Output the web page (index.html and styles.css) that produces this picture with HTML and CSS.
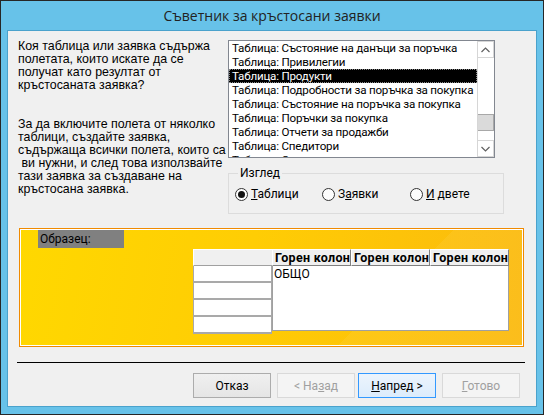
FILE: index.html
```html
<!DOCTYPE html>
<html lang="bg">
<head>
    <meta charset="utf-8">
    <title>Съветник за кръстосани заявки</title>
    <link rel="stylesheet" href="styles.css">
</head>
<body>
    <div class="window">
        <div class="titlebar">Съветник за кръстосани заявки</div>
        <div class="client">
            <div class="top">
                <div class="intro">
                    <p>Коя таблица или заявка съдържа<br>полетата, които искате да се<br>получат като резултат от<br>кръстосаната заявка?</p>
                    <p>За да включите полета от няколко<br>таблици, създайте заявка,<br>съдържаща всички полета, които са<br>&nbsp;ви нужни, и след това използвайте<br>тази заявка за създаване на<br>кръстосана заявка.</p>
                </div>
                <div class="picker">
                    <div class="listbox">
                        <ul class="items">
                            <li>Таблица: Състояние на данъци за поръчка</li>
                            <li>Таблица: Привилегии</li>
                            <li class="selected">Таблица: Продукти</li>
                            <li>Таблица: Подробности за поръчка за покупка</li>
                            <li>Таблица: Състояние на поръчка за покупка</li>
                            <li>Таблица: Поръчки за покупка</li>
                            <li>Таблица: Отчети за продажби</li>
                            <li>Таблица: Спедитори</li>
                            <li>Таблица: Служители</li>
                        </ul>
                        <div class="scrollbar">
                            <span class="sb-btn">
                                <svg width="9" height="6" viewBox="0 0 9 6"><path d="M0.5 5 L4.5 1 L8.5 5" fill="none" stroke="#606060" stroke-width="1.2"/></svg>
                            </span>
                            <span class="sb-track"><span class="sb-thumb"></span></span>
                            <span class="sb-btn">
                                <svg width="9" height="6" viewBox="0 0 9 6"><path d="M0.5 1 L4.5 5 L8.5 1" fill="none" stroke="#606060" stroke-width="1.2"/></svg>
                            </span>
                        </div>
                    </div>
                    <fieldset class="view">
                        <legend>Изглед</legend>
                        <label class="radio checked"><span class="circle"></span><span><u>Т</u>аблици</span></label>
                        <label class="radio"><span class="circle"></span><span>З<u>а</u>явки</span></label>
                        <label class="radio"><span class="circle"></span><span><u>И</u> двете</span></label>
                    </fieldset>
                </div>
            </div>

            <div class="sample">
                <div class="sample-label">Образец:</div>
                <div class="grid">
                    <div class="rowhdr">
                        <div class="corner"></div>
                        <div class="rcell"></div>
                        <div class="rcell"></div>
                        <div class="rcell"></div>
                        <div class="rcell"></div>
                    </div>
                    <div class="data">
                        <div class="heads">
                            <div class="head">Горен колона</div>
                            <div class="head">Горен колона</div>
                            <div class="head">Горен колона</div>
                        </div>
                        <div class="body">ОБЩО</div>
                    </div>
                </div>
            </div>

            <div class="divider"></div>

            <div class="buttons">
                <button class="btn">Отказ</button>
                <button class="btn disabled">&lt; На<u>з</u>ад</button>
                <button class="btn default"><u>Н</u>апред &gt;</button>
                <button class="btn disabled"><u>Г</u>отово</button>
            </div>
        </div>
    </div>
</body>
</html>
```

FILE: styles.css
```css
* {
    margin: 0;
    padding: 0;
    box-sizing: border-box;
}

body {
    background: #fff;
}

.window {
    width: 544px;
    height: 415px;
    border: 1px solid #262626;
    background: #67c2e9;
    display: flex;
    flex-direction: column;
    font-family: Roboto, "Liberation Sans", sans-serif;
    font-size: 12px;
    color: #000;
}

.titlebar {
    height: 29px;
    line-height: 29px;
    text-align: center;
    font-family: "Open Sans", sans-serif;
    font-size: 14px;
    color: #222;
}

.client {
    flex: 1;
    margin: 0 6px 7px;
    border: 1px solid #4aa2cc;
    background: #f0f0f0;
    padding-top: 9px;
    display: flex;
    flex-direction: column;
}

/* горна част: текст отляво, списък и изглед отдясно */
.top {
    display: grid;
    grid-template-columns: 200px 269px;
    column-gap: 10px;
    margin-left: 10px;
}

.intro {
    font-family: "Liberation Sans", sans-serif;
    font-size: 12.4px;
    line-height: 13px;
}

.intro p {
    white-space: nowrap;
}

.intro p + p {
    margin-top: 26px;
}

.listbox {
    width: 267px;
    height: 118px;
    border: 1px solid #828790;
    background: #fff;
    display: flex;
}

.items {
    flex: 1;
    list-style: none;
    overflow: hidden;
    font-size: 11.6px;
    letter-spacing: -0.2px;
}

.items li {
    height: 14px;
    line-height: 14px;
    padding-left: 3px;
    white-space: nowrap;
}

.items li.selected {
    background: #000;
    color: #fff;
    outline: 1px dotted #888;
    outline-offset: -1px;
}

.scrollbar {
    width: 17px;
    display: flex;
    flex-direction: column;
    border-left: 1px solid #d6d6d6;
}

.sb-btn {
    height: 17px;
    display: flex;
    align-items: center;
    justify-content: center;
    border: 1px solid #d6d6d6;
    border-left: none;
    background: #fff;
}

.sb-track {
    flex: 1;
    background: #fff;
}

.sb-thumb {
    display: block;
    height: 17px;
    margin-top: 56px;
    background: #dadada;
    border: 1px solid #a8a8a8;
    border-left: none;
}

.view {
    width: 269px;
    margin-top: 7px;
    border: 1px solid #dcdcdc;
    padding: 5px 6px 11px;
    display: flex;
}

.view legend {
    margin-left: 3px;
    padding: 0 2px;
    line-height: 16px;
}

.radio {
    display: flex;
    align-items: center;
    height: 16px;
    width: 87px;
}

.radio:nth-of-type(2) {
    width: 88px;
}

.radio .circle {
    width: 13px;
    height: 13px;
    border: 1px solid #333;
    border-radius: 50%;
    background: #fdfdfd;
    margin-right: 3px;
    display: flex;
    align-items: center;
    justify-content: center;
}

.radio.checked .circle::after {
    content: '';
    width: 7px;
    height: 7px;
    border-radius: 50%;
    background: #111;
}

/* жълтото поле с образеца */
.sample {
    width: 505px;
    height: 119px;
    margin: 14px 0 0 11px;
    border: 1px solid #f08a00;
    box-shadow: inset 0 0 0 1px #fff;
    padding: 1px 0 0 18px;
    background:
        linear-gradient(135deg, transparent 0 70%, rgba(255, 255, 255, 0.06) 70% 100%),
        linear-gradient(100deg, #ffd800 0%, #ffcd04 45%, #fbb90e 100%);
}

.sample-label {
    width: 86px;
    height: 18px;
    line-height: 18px;
    background: #808080;
    padding-left: 2px;
}

.grid {
    display: flex;
    margin: 1px 0 0 155px;
}

.rowhdr {
    width: 79px;
}

.corner {
    height: 17px;
    background: #f0f0f0;
    border-top: 1px solid #fff;
    border-left: 1px solid #fff;
    border-bottom: 1px solid #a0a0a0;
}

.rcell {
    height: 16px;
    background: #fff;
    border: 1px solid #a9a9a9;
    border-top: none;
    box-shadow: 0 1px 0 #a9a9a9;
    margin-bottom: 1px;
}

.data {
    width: 237px;
}

.heads {
    display: flex;
    height: 17px;
}

.head {
    flex: 1;
    overflow: hidden;
    white-space: nowrap;
    background: #f0f0f0;
    border-top: 1px solid #fff;
    border-left: 1px solid #fff;
    border-right: 1px solid #808080;
    border-bottom: 1px solid #808080;
    font-weight: bold;
    font-size: 12.5px;
    letter-spacing: 0.3px;
    line-height: 15px;
    padding-left: 2px;
}

.body {
    height: 65px;
    background: #fff;
    border: 1px solid #a0a0a0;
    border-top: none;
    padding: 0 1px;
    line-height: 16px;
}

.divider {
    height: 1px;
    background: #000;
    margin: 15px 11px 0 9px;
}

.buttons {
    display: flex;
    justify-content: flex-end;
    margin-top: 10px;
    padding-right: 16px;
}

.btn {
    width: 78px;
    height: 25px;
    margin-left: 6px;
    font-family: inherit;
    font-size: 12px;
    color: #000;
    border: 1px solid #acacac;
    background: linear-gradient(#f0f0f0, #e5e5e5);
}

.btn.default {
    margin-left: 3px;
    border-color: #3399ff;
    background: linear-gradient(#ecf4fc, #dcecfc);
}

.btn.disabled {
    color: #a0a0a0;
    border-color: #d9d9d9;
    background: #f4f4f4;
}
```
